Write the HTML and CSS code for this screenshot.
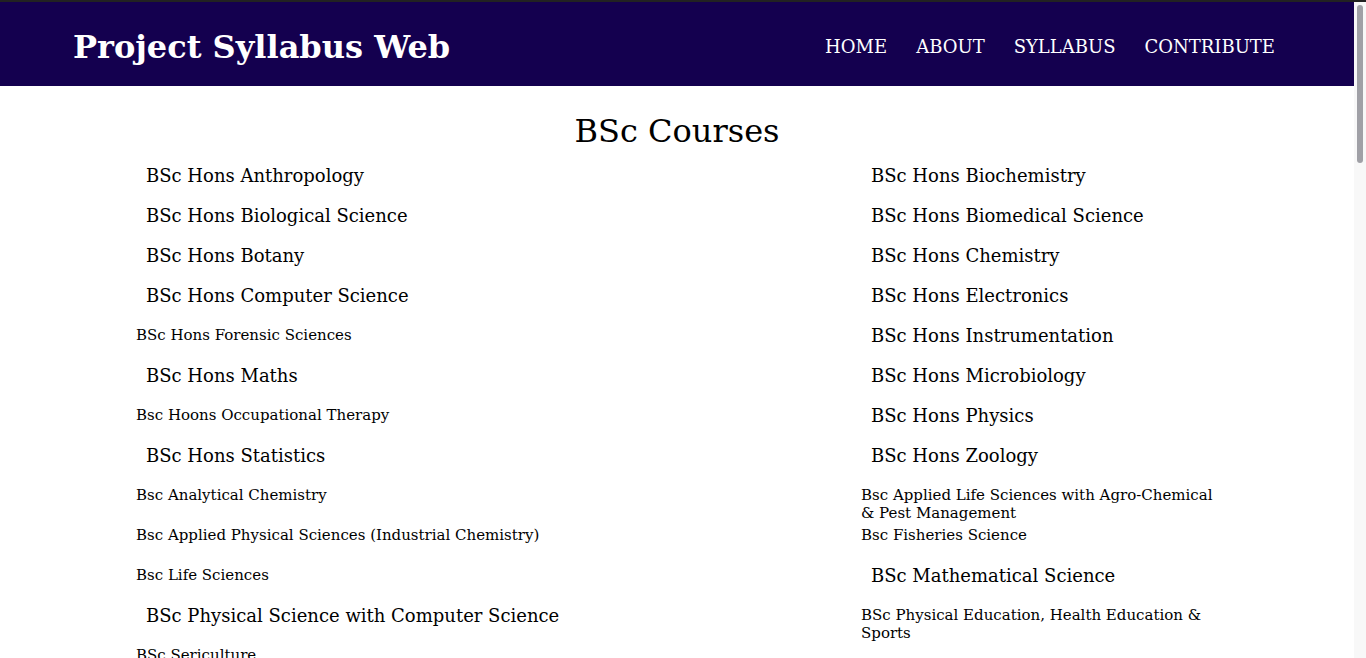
FILE: index.html
```html
<!DOCTYPE html>
<html lang="en">
<head>
<meta charset="utf-8">
<title>Project Syllabus Web - BSc Courses</title>
<link rel="stylesheet" href="styles.css">
</head>
<body>
<div class="topline"></div>
<div class="frame">
<div class="page">
<header class="site-header">
  <a class="brand" href="#">Project Syllabus Web</a>
  <nav class="nav">
    <a href="#">HOME</a>
    <a href="#">ABOUT</a>
    <a href="#">SYLLABUS</a>
    <a href="#">CONTRIBUTE</a>
  </nav>
</header>
<main class="content">
  <h1 class="page-title">BSc Courses</h1>
  <div class="courses">
    <a class="course big" href="#">BSc Hons Anthropology</a>
    <a class="course big" href="#">BSc Hons Biochemistry</a>
    <a class="course big" href="#">BSc Hons Biological Science</a>
    <a class="course big" href="#">BSc Hons Biomedical Science</a>
    <a class="course big" href="#">BSc Hons Botany</a>
    <a class="course big" href="#">BSc Hons Chemistry</a>
    <a class="course big" href="#">BSc Hons Computer Science</a>
    <a class="course big" href="#">BSc Hons Electronics</a>
    <a class="course small" href="#">BSc Hons Forensic Sciences</a>
    <a class="course big" href="#">BSc Hons Instrumentation</a>
    <a class="course big" href="#">BSc Hons Maths</a>
    <a class="course big" href="#">BSc Hons Microbiology</a>
    <a class="course small" href="#">Bsc Hoons Occupational Therapy</a>
    <a class="course big" href="#">BSc Hons Physics</a>
    <a class="course big" href="#">BSc Hons Statistics</a>
    <a class="course big" href="#">BSc Hons Zoology</a>
    <a class="course small" href="#">Bsc Analytical Chemistry</a>
    <a class="course small" href="#">Bsc Applied Life Sciences with Agro-Chemical &amp; Pest Management</a>
    <a class="course small" href="#">Bsc Applied Physical Sciences (Industrial Chemistry)</a>
    <a class="course small" href="#">Bsc Fisheries Science</a>
    <a class="course small" href="#">Bsc Life Sciences</a>
    <a class="course big" href="#">BSc Mathematical Science</a>
    <a class="course big" href="#">BSc Physical Science with Computer Science</a>
    <a class="course small" href="#">BSc Physical Education, Health Education &amp; Sports</a>
    <a class="course small" href="#">BSc Sericulture</a>
  </div>
</main>
</div>
<div class="scrollbar"><div class="thumb"></div></div>
</div>
</body>
</html>
```
FILE: styles.css
```css
html, body {
  margin: 0;
  padding: 0;
  height: 100%;
  overflow: hidden;
}
body {
  font-family: "DejaVu Serif", serif;
  color: #000;
  background: #fff;
}
a {
  color: inherit;
  text-decoration: none;
}
.topline {
  height: 2px;
  background: #222;
}
.frame {
  display: flex;
  height: calc(100vh - 2px);
  overflow: hidden;
}
.page {
  flex: 1;
  min-width: 0;
}
.scrollbar {
  width: 12px;
  flex: none;
  background: #f8f8f8;
  padding: 3px 3px 0;
  box-sizing: border-box;
}
.thumb {
  width: 6px;
  height: 158px;
  background: #a0a0a6;
  border-radius: 3px;
}
.site-header {
  height: 84px;
  background: #14004f;
  display: flex;
  align-items: center;
  justify-content: space-between;
  padding: 0 79px 0 73px;
  color: #fff;
}
.brand {
  font-size: 32px;
  font-weight: bold;
  margin-top: 5px;
}
.nav {
  display: flex;
  gap: 29px;
  font-size: 18px;
  margin-top: 4px;
}
.page-title {
  margin: 27px 0 15px;
  font-size: 32px;
  font-weight: normal;
  line-height: 37px;
  text-align: center;
}
.courses {
  display: grid;
  grid-template-columns: 725px 362px;
  grid-auto-rows: 40px;
  margin-left: 136px;
}
.course {
  display: block;
}
.course.big {
  font-size: 18px;
  line-height: 21px;
  padding: 0 0 0 10px;
}
.course.small {
  font-size: 15px;
  line-height: 18px;
  padding-top: 1px;
}
```
